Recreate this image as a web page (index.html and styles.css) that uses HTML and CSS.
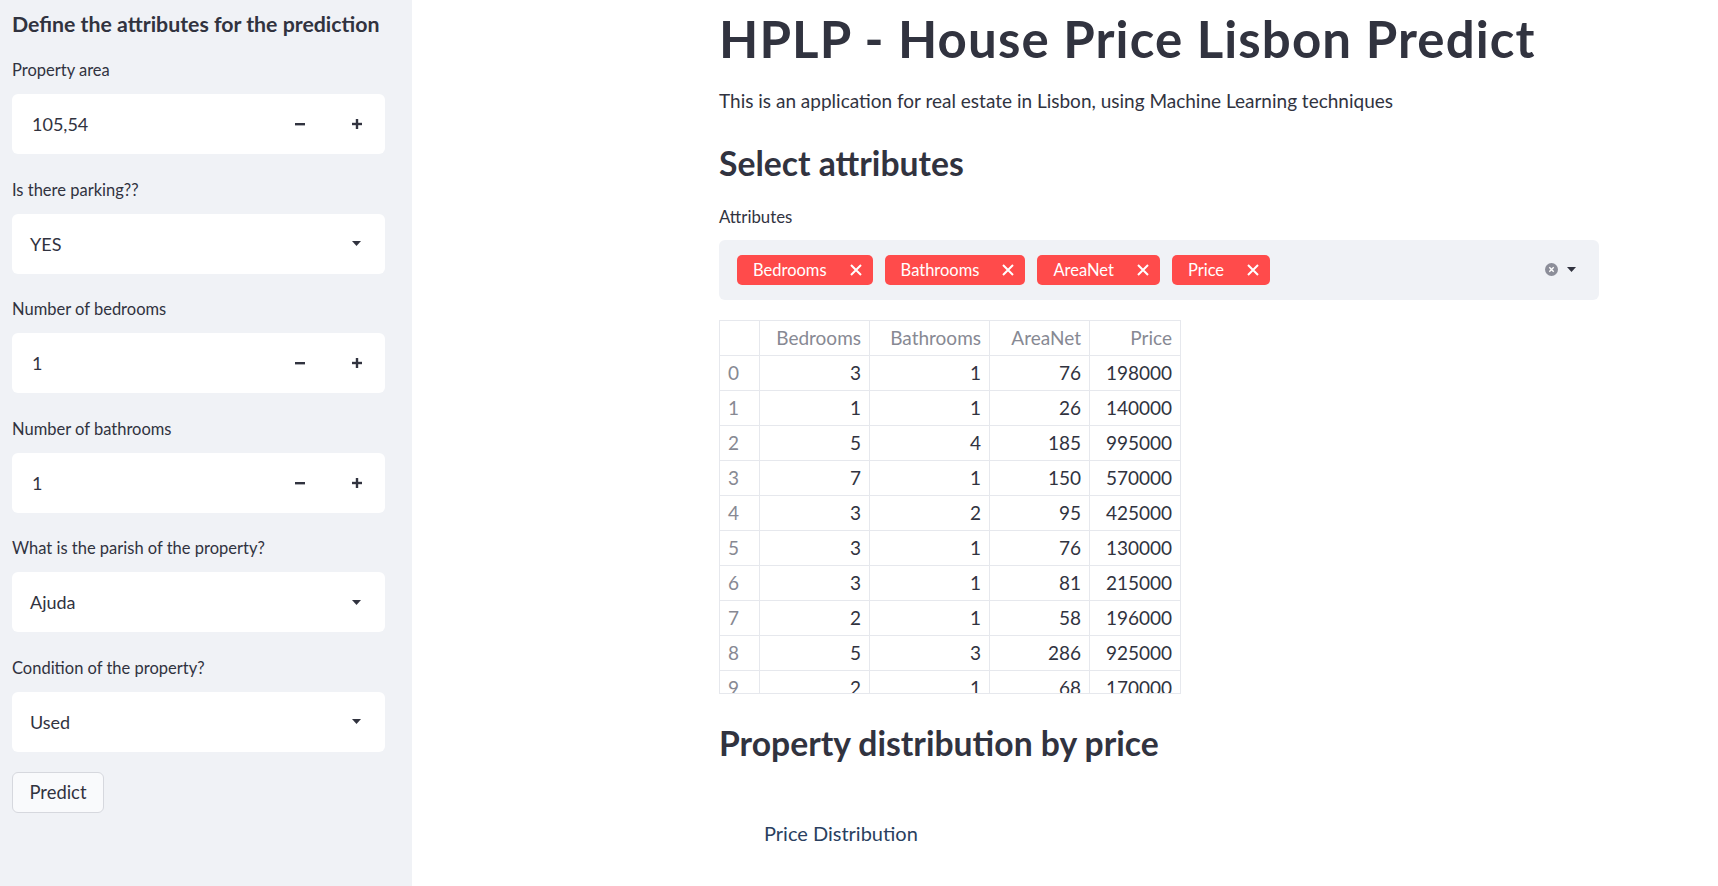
FILE: index.html
```html
<!DOCTYPE html>
<html lang="en">
<head>
<meta charset="utf-8">
<title>HPLP - House Price Lisbon Predict</title>
<link rel="stylesheet" href="styles.css">
</head>
<body>
<div class="app">
  <aside class="sidebar">
    <h3 class="side-title">Define the attributes for the prediction</h3>

    <div class="field">
      <label class="field-label">Property area</label>
      <div class="num-input">
        <span class="value num-value">105,54</span>
        <div class="steppers">
          <span class="step"><svg width="10" height="10" viewBox="0 0 10 10"><rect x="0" y="4" width="10" height="2.4" fill="#31333f"/></svg></span>
          <span class="step"><svg width="10" height="10" viewBox="0 0 10 10"><rect x="0" y="3.8" width="10" height="2.4" fill="#31333f"/><rect x="3.8" y="0" width="2.4" height="10" fill="#31333f"/></svg></span>
        </div>
      </div>
    </div>

    <div class="field">
      <label class="field-label">Is there parking??</label>
      <div class="select">
        <span class="value">YES</span>
        <svg class="caret" width="9" height="5" viewBox="0 0 9 5"><path d="M0 0h9L4.5 5z" fill="#31333f"/></svg>
      </div>
    </div>

    <div class="field">
      <label class="field-label">Number of bedrooms</label>
      <div class="num-input">
        <span class="value num-value">1</span>
        <div class="steppers">
          <span class="step"><svg width="10" height="10" viewBox="0 0 10 10"><rect x="0" y="4" width="10" height="2.4" fill="#31333f"/></svg></span>
          <span class="step"><svg width="10" height="10" viewBox="0 0 10 10"><rect x="0" y="3.8" width="10" height="2.4" fill="#31333f"/><rect x="3.8" y="0" width="2.4" height="10" fill="#31333f"/></svg></span>
        </div>
      </div>
    </div>

    <div class="field">
      <label class="field-label">Number of bathrooms</label>
      <div class="num-input">
        <span class="value num-value">1</span>
        <div class="steppers">
          <span class="step"><svg width="10" height="10" viewBox="0 0 10 10"><rect x="0" y="4" width="10" height="2.4" fill="#31333f"/></svg></span>
          <span class="step"><svg width="10" height="10" viewBox="0 0 10 10"><rect x="0" y="3.8" width="10" height="2.4" fill="#31333f"/><rect x="3.8" y="0" width="2.4" height="10" fill="#31333f"/></svg></span>
        </div>
      </div>
    </div>

    <div class="field">
      <label class="field-label">What is the parish of the property?</label>
      <div class="select">
        <span class="value">Ajuda</span>
        <svg class="caret" width="9" height="5" viewBox="0 0 9 5"><path d="M0 0h9L4.5 5z" fill="#31333f"/></svg>
      </div>
    </div>

    <div class="field">
      <label class="field-label">Condition of the property?</label>
      <div class="select">
        <span class="value">Used</span>
        <svg class="caret" width="9" height="5" viewBox="0 0 9 5"><path d="M0 0h9L4.5 5z" fill="#31333f"/></svg>
      </div>
    </div>

    <button class="predict">Predict</button>
  </aside>

  <main class="main">
    <div class="block">
      <h1 class="title">HPLP - House Price Lisbon Predict</h1>
      <p class="intro">This is an application for real estate in Lisbon, using Machine Learning techniques</p>

      <h2 class="header first">Select attributes</h2>
      <div class="ms-label">Attributes</div>
      <div class="multiselect">
        <div class="tags">
          <span class="tag">Bedrooms<svg class="tag-x" width="12" height="12" viewBox="0 0 12 12"><path d="M1 1L11 11M11 1L1 11" stroke="#fff" stroke-width="2"/></svg></span>
          <span class="tag">Bathrooms<svg class="tag-x" width="12" height="12" viewBox="0 0 12 12"><path d="M1 1L11 11M11 1L1 11" stroke="#fff" stroke-width="2"/></svg></span>
          <span class="tag">AreaNet<svg class="tag-x" width="12" height="12" viewBox="0 0 12 12"><path d="M1 1L11 11M11 1L1 11" stroke="#fff" stroke-width="2"/></svg></span>
          <span class="tag">Price<svg class="tag-x" width="12" height="12" viewBox="0 0 12 12"><path d="M1 1L11 11M11 1L1 11" stroke="#fff" stroke-width="2"/></svg></span>
        </div>
        <div class="ms-controls">
          <svg width="13" height="13" viewBox="0 0 13 13"><circle cx="6.5" cy="6.5" r="6.5" fill="#8c8e99"/><path d="M4.3 4.3L8.7 8.7M8.7 4.3L4.3 8.7" stroke="#fff" stroke-width="1.4"/></svg>
          <svg width="9" height="5" viewBox="0 0 9 5"><path d="M0 0h9L4.5 5z" fill="#31333f"/></svg>
        </div>
      </div>

      <div class="df">
        <div class="row head"><span class="cell idx"></span><span class="cell">Bedrooms</span><span class="cell">Bathrooms</span><span class="cell">AreaNet</span><span class="cell">Price</span></div>
        <div class="row"><span class="cell idx">0</span><span class="cell">3</span><span class="cell">1</span><span class="cell">76</span><span class="cell">198000</span></div>
        <div class="row"><span class="cell idx">1</span><span class="cell">1</span><span class="cell">1</span><span class="cell">26</span><span class="cell">140000</span></div>
        <div class="row"><span class="cell idx">2</span><span class="cell">5</span><span class="cell">4</span><span class="cell">185</span><span class="cell">995000</span></div>
        <div class="row"><span class="cell idx">3</span><span class="cell">7</span><span class="cell">1</span><span class="cell">150</span><span class="cell">570000</span></div>
        <div class="row"><span class="cell idx">4</span><span class="cell">3</span><span class="cell">2</span><span class="cell">95</span><span class="cell">425000</span></div>
        <div class="row"><span class="cell idx">5</span><span class="cell">3</span><span class="cell">1</span><span class="cell">76</span><span class="cell">130000</span></div>
        <div class="row"><span class="cell idx">6</span><span class="cell">3</span><span class="cell">1</span><span class="cell">81</span><span class="cell">215000</span></div>
        <div class="row"><span class="cell idx">7</span><span class="cell">2</span><span class="cell">1</span><span class="cell">58</span><span class="cell">196000</span></div>
        <div class="row"><span class="cell idx">8</span><span class="cell">5</span><span class="cell">3</span><span class="cell">286</span><span class="cell">925000</span></div>
        <div class="row"><span class="cell idx">9</span><span class="cell">2</span><span class="cell">1</span><span class="cell">68</span><span class="cell">170000</span></div>
      </div>

      <h2 class="header second">Property distribution by price</h2>
      <div class="chart">
        <div class="chart-title">Price Distribution</div>
      </div>
    </div>
  </main>
</div>
</body>
</html>
```

FILE: styles.css
```css
* { box-sizing: border-box; }

html, body {
  margin: 0;
  padding: 0;
  height: 100%;
  overflow: hidden;
  background: #ffffff;
  font-family: "Lato", "Liberation Sans", sans-serif;
  color: #31333f;
}

.app {
  display: flex;
  height: 886px;
}

/* ---------- sidebar ---------- */
.sidebar {
  width: 412px;
  flex: 0 0 412px;
  background: #f0f2f6;
  padding: 0 27px 0 12px;
  display: flex;
  flex-direction: column;
  align-items: stretch;
}

.side-title {
  margin: 0 0 17px 0;
  padding-top: 11px;
  font-size: 21.3px;
  line-height: 26px;
  font-weight: 700;
  white-space: nowrap;
}

.field {
  display: flex;
  flex-direction: column;
  margin-bottom: 19.6px;
}

.field-label {
  padding-top: 6px;
  margin-bottom: 14px;
  font-size: 16.5px;
  line-height: 20px;
}

.num-input,
.select {
  height: 60px;
  background: #ffffff;
  border-radius: 6px;
  display: flex;
  align-items: center;
}

.value {
  font-size: 18px;
  flex: 1;
}

.num-input .value { padding-left: 20px; }
.select .value { padding-left: 18px; }

.steppers {
  display: flex;
  width: 113px;
  height: 100%;
}

.step {
  flex: 1;
  display: flex;
  align-items: center;
  justify-content: center;
}

.caret {
  margin-right: 24px;
}

.predict {
  align-self: flex-start;
  margin-top: 0.4px;
  height: 41px;
  width: 92px;
  padding: 0;
  background: #f9fafc;
  border: 1px solid #d6d8de;
  border-radius: 6px;
  font-family: inherit;
  font-size: 18.4px;
  color: #31333f;
}

/* ---------- main ---------- */
.main {
  flex: 1;
  padding: 9px 0 0 307px;
}

.block {
  width: 880px;
  display: flex;
  flex-direction: column;
}

.title {
  margin: 0;
  font-size: 51px;
  line-height: 60px;
  font-weight: 700;
  letter-spacing: 1.1px;
  white-space: nowrap;
}

.intro {
  margin: 17px 0 0 0;
  font-size: 19px;
  line-height: 30.4px;
}

.header {
  margin: 0;
  font-size: 33.7px;
  line-height: 40.4px;
  font-weight: 700;
}

.header.first { margin-top: 26.7px; }
.header.second { margin-top: 29px; }

.ms-label {
  margin-top: 23px;
  font-size: 16.8px;
  line-height: 20px;
}

.multiselect {
  margin-top: 13.3px;
  height: 60px;
  background: #f0f2f6;
  border-radius: 6px;
  display: flex;
  align-items: center;
  padding: 0 23px 0 18px;
}

.tags {
  flex: 1;
  display: flex;
  gap: 12px;
}

.tag {
  height: 30px;
  background: #ff4b4b;
  color: #ffffff;
  border-radius: 5px;
  display: flex;
  align-items: center;
  padding: 0 11px 0 16px;
  font-size: 16.5px;
}

.tag-x {
  margin-left: 23px;
}

.ms-controls {
  display: flex;
  align-items: center;
  gap: 9px;
}

/* dataframe */
.df {
  margin-top: 20px;
  width: 462px;
  height: 374px;
  border: 1px solid #e6e8ed;
  overflow: hidden;
}

.row {
  display: grid;
  grid-template-columns: 40px 110px 120px 100px 90px;
  height: 35px;
}

.cell {
  border-right: 1px solid #e6e8ed;
  border-bottom: 1px solid #e6e8ed;
  padding: 0 8px;
  text-align: right;
  font-size: 19px;
  line-height: 34px;
  color: #31333f;
  white-space: nowrap;
}

.cell:last-child { border-right: none; }

.row.head .cell { color: #878993; }

.cell.idx {
  text-align: left;
  color: #878993;
}

/* chart */
.chart {
  padding: 58.2px 0 0 45px;
}

.chart-title {
  font-size: 20px;
  line-height: 24px;
  color: #2a3f5f;
}
```
